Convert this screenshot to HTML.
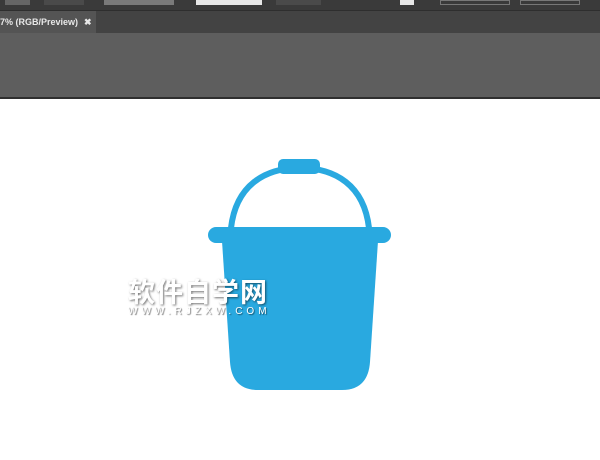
<!DOCTYPE html>
<html><head><meta charset="utf-8"><style>
*{margin:0;padding:0;box-sizing:border-box}
body{width:600px;height:460px;overflow:hidden;background:#fff;font-family:"Liberation Sans",sans-serif;position:relative}
.top{position:absolute;left:0;top:0;width:600px;height:10px;background:#3a3a3a}
.top div{position:absolute;top:0;height:5px}
.tabbar{position:absolute;left:0;top:10px;width:600px;height:23px;background:#434343;border-top:1px solid #2e2e2e}
.tab{position:absolute;left:0;top:0;width:96px;height:22px;background:#545454;color:#e8e8e8;font-size:9px;font-weight:bold;line-height:22px;white-space:nowrap}
.tab b{position:absolute;left:84px;top:0;font-size:9px}
.gray{position:absolute;left:0;top:33px;width:600px;height:64px;background:#5e5e5e}
.line{position:absolute;left:0;top:97px;width:600px;height:2px;background:#2f2f2f}
.wm{position:absolute;left:128px;top:276px;color:#fff;text-shadow:1px 1px 2px rgba(0,0,0,.55);font-family:"Noto Sans CJK SC",sans-serif;font-weight:bold;font-size:27px;line-height:30px;letter-spacing:1px}
.wm2{position:absolute;left:128px;top:306px;color:#fff;text-shadow:1px 1px 1px rgba(0,0,0,.55);font-size:10px;letter-spacing:4px}
</style></head><body>
<div class="top">
<div style="left:5px;width:25px;background:#666"></div>
<div style="left:44px;width:40px;background:#4a4a4a"></div>
<div style="left:104px;width:70px;background:#7a7a7a"></div>
<div style="left:196px;width:66px;background:#e8e8e8"></div>
<div style="left:276px;width:45px;background:#4a4a4a"></div>
<div style="left:400px;width:14px;background:#e8e8e8"></div>
<div style="left:440px;width:70px;border:1px solid #777"></div>
<div style="left:520px;width:60px;border:1px solid #777"></div>
</div>
<div class="tabbar"><div class="tab">7% (RGB/Preview)<b>✖</b></div></div>
<div class="gray"></div>
<div class="line"></div>
<svg style="position:absolute;left:0;top:0" width="600" height="460">
<path d="M231 228 C236 185 265 168 300 168 C335 168 364 185 369 228" fill="none" stroke="#29a9e0" stroke-width="6"/>
<rect x="278" y="159" width="42" height="15" rx="5" fill="#29a9e0"/>
<rect x="208" y="227" width="183" height="16" rx="8" fill="#29a9e0"/>
<path d="M222 241 L378 241 L370 362 Q368 390 342 390 L258 390 Q232 390 230 362 Z" fill="#29a9e0"/>
</svg>
<div class="wm">软件自学网</div>
<div class="wm2">WWW.RJZXW.COM</div>
</body></html>
